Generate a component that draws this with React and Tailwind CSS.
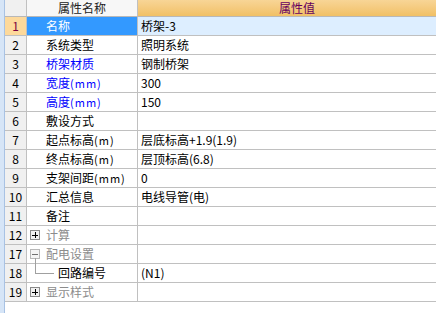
import React from "react";

const rows = [
  { n: "1", name: "名称", value: "桥架-3", selected: true },
  { n: "2", name: "系统类型", value: "照明系统" },
  { n: "3", name: "桥架材质", value: "钢制桥架", blue: true },
  { n: "4", name: "宽度", unit: "(mm)", value: "300", blue: true },
  { n: "5", name: "高度", unit: "(mm)", value: "150", blue: true },
  { n: "6", name: "敷设方式", value: "" },
  { n: "7", name: "起点标高", unit: "(m)", value: "层底标高+1.9(1.9)" },
  { n: "8", name: "终点标高", unit: "(m)", value: "层顶标高(6.8)" },
  { n: "9", name: "支架间距", unit: "(mm)", value: "0" },
  { n: "10", name: "汇总信息", value: "电线导管(电)" },
  { n: "11", name: "备注", value: "" },
  { n: "12", name: "计算", group: "plus" },
  { n: "17", name: "配电设置", group: "minus" },
  { n: "18", name: "回路编号", value: "(N1)", child: true },
  { n: "19", name: "显示样式", group: "plus" },
];

function Box({ minus }) {
  return (
    <span
      className={`relative inline-flex w-[10px] h-[10px] items-center justify-center border ${
        minus ? "border-[#b8b8b8] bg-[#f4f4f4]" : "border-[#8a8a8a] bg-[#f0f0f0]"
      }`}
    >
      <span className={`absolute w-[6px] h-[1px] ${minus ? "bg-[#707070]" : "bg-black"}`} />
      {!minus && <span className="absolute w-[1px] h-[6px] bg-black" />}
    </span>
  );
}

export default function App() {
  const font = { fontFamily: '"Noto Sans CJK SC", "Noto Sans", sans-serif' };
  return (
    <div className="w-[436px] h-[313px] bg-white flex overflow-hidden text-[12px] leading-none" style={font}>
      <div className="w-[5px] h-full bg-[#d6e5f7] border-r border-[#a8c2e4]" />
      <div className="flex-1 flex flex-col">
        <div className="flex h-[17px] border-b border-[#b8b8b8]">
          <div className="w-[22px] bg-[#f0f0f0] border-r border-[#c0c0c0]" />
          <div className="w-[111px] bg-[#f7f7f7] border-r border-[#c0c0c0] flex items-center justify-center text-[#222]">
            属性名称
          </div>
          <div className="flex-1 bg-gradient-to-b from-[#f8d596] to-[#f1c065] flex items-center pl-[141px] text-[#66005f]">
            属性值
          </div>
        </div>
        {rows.map((r) => (
          <div key={r.n} className="flex h-[19px] border-b border-[#c0c0c0]">
            <div
              className={`w-[22px] border-r border-[#c0c0c0] flex items-center justify-center ${
                r.selected ? "bg-[#fdd99b] text-[#7a0040]" : "bg-[#f0f0f0] text-black"
              }`}
            >
              {r.n}
            </div>
            <div
              className={`relative w-[111px] border-r border-[#c0c0c0] flex items-center ${
                r.selected ? "bg-[#3399ff] text-white" : ""
              } ${r.group ? "pl-[3px]" : r.child ? "pl-[31px]" : "pl-[19px]"}`}
            >
              {r.group && (
                <>
                  <Box minus={r.group === "minus"} />
                  <span className="ml-[6px] text-[#8c8c8c]">{r.name}</span>
                </>
              )}
              {r.child && (
                <>
                  <span className="absolute left-[8px] top-[-6px] w-[1px] h-[15px] bg-[#a0a0a0]" />
                  <span className="absolute left-[8px] top-[9px] w-[19px] h-[1px] bg-[#a0a0a0]" />
                  <span className="text-black">{r.name}</span>
                </>
              )}
              {!r.group && !r.child && (
                <span className={r.selected ? "text-white" : r.blue ? "text-[#0000ff]" : "text-black"}>
                  {r.name}
                  {r.unit && <span className="text-[11px] tracking-[1px]">{r.unit}</span>}
                </span>
              )}
            </div>
            <div className={`flex-1 flex items-center pl-[3px] text-black ${r.selected ? "bg-[#ddeeff]" : ""}`}>
              {r.value}
            </div>
          </div>
        ))}
      </div>
    </div>
  );
}
